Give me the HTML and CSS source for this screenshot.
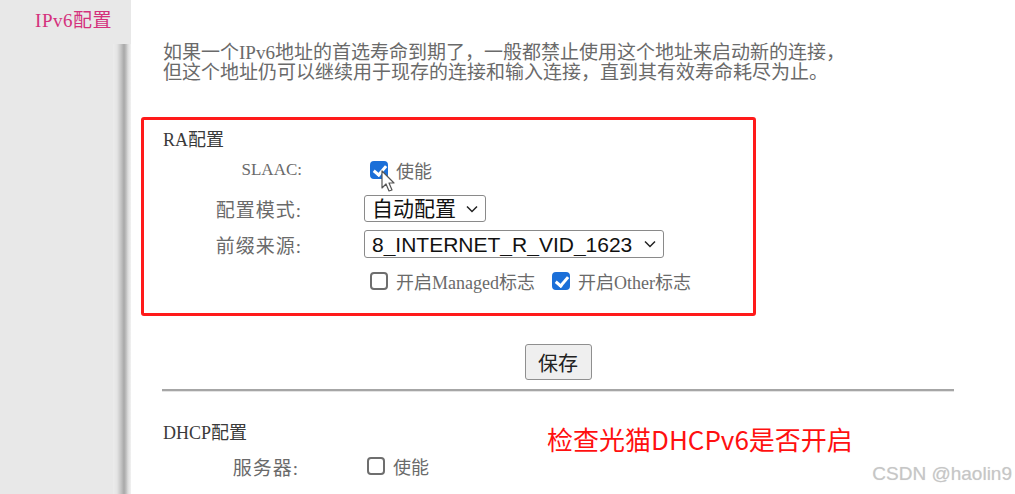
FILE: index.html
```html
<html lang="zh-CN">
<head>
    <meta charset="UTF-8">
    <meta name="viewport" content="width=device-width, initial-scale=1.0">
    <title>IPv6配置</title>
    <link rel="stylesheet" href="styles.css">
</head>
<body>

    <!-- left menu -->
    <div class="sidebar">
        <div class="menu-title">IPv6配置</div>
        <div class="menu-track">
            <div class="menu-bar"></div>
        </div>
    </div>

    <!-- main settings -->
    <div class="main">
        <p class="intro">如果一个IPv6地址的首选寿命到期了，一般都禁止使用这个地址来启动新的连接，<br>但这个地址仍可以继续用于现存的连接和输入连接，直到其有效寿命耗尽为止。</p>

        <div class="ra-box">
            <div class="group-title">RA配置</div>

            <div class="row row-slaac">
                <label class="label label-latin" for="slaac">SLAAC:</label>
                <div class="control">
                    <input type="checkbox" class="check" id="slaac" checked>
                    <span class="check-text">使能</span>
                    <svg class="cursor" width="16" height="24" viewBox="0 0 16 24">
                        <path d="M1 1 L1 18 L5 14 L8 21 L11 20 L8 13 L13 13 Z" fill="#fff" stroke="#555" stroke-width="1.2" stroke-linejoin="round"/>
                    </svg>
                </div>
            </div>

            <div class="row row-mode">
                <label class="label" for="mode">配置模式:</label>
                <div class="control">
                    <div class="select-wrap">
                        <select id="mode" class="select">
                            <option>自动配置</option>
                        </select>
                        <svg class="chevron" width="12" height="8" viewBox="0 0 12 8"><path d="M1 1.5 L6 6.5 L11 1.5" fill="none" stroke="#222" stroke-width="1.5"/></svg>
                    </div>
                </div>
            </div>

            <div class="row row-prefix">
                <label class="label" for="prefix">前缀来源:</label>
                <div class="control">
                    <div class="select-wrap">
                        <select id="prefix" class="select select-wide">
                            <option>8_INTERNET_R_VID_1623</option>
                        </select>
                        <svg class="chevron" width="12" height="8" viewBox="0 0 12 8"><path d="M1 1.5 L6 6.5 L11 1.5" fill="none" stroke="#222" stroke-width="1.5"/></svg>
                    </div>
                </div>
            </div>

            <div class="row row-flags">
                <span class="label"></span>
                <div class="control">
                    <input type="checkbox" class="check" id="managed">
                    <span class="check-text">开启Managed标志</span>
                    <input type="checkbox" class="check check-gap" id="other" checked>
                    <span class="check-text">开启Other标志</span>
                </div>
            </div>
        </div>

        <div class="actions">
            <button class="save-btn">保存</button>
            <div class="divider"></div>
        </div>

        <div class="dhcp">
            <div class="group-title">DHCP配置</div>
            <div class="row row-server">
                <label class="label" for="server">服务器:</label>
                <div class="control">
                    <input type="checkbox" class="check" id="server">
                    <span class="check-text">使能</span>
                </div>
            </div>
        </div>
    </div>

    <!-- annotation + watermark -->
    <div class="note">检查光猫DHCPv6是否开启</div>
    <div class="watermark">CSDN @haolin9</div>

</body>
</html>
```

FILE: styles.css
```css
body {
    margin: 0;
    height: 494px;
    overflow: hidden;
    display: flex;
    background: #fff;
    font-family: "Liberation Serif", "Noto Sans CJK SC", serif;
    position: relative;
}

.sidebar {
    width: 131px;
    flex-shrink: 0;
    display: flex;
    flex-direction: column;
    background: #e8e8e8;
}

.menu-title {
    height: 44px;
    line-height: 42px;
    text-align: right;
    padding-right: 19px;
    font-size: 19px;
    letter-spacing: 0.5px;
    color: #d4317c;
}

.menu-track {
    flex: 1;
    padding-left: 113px;
}

.menu-bar {
    width: 18px;
    height: 100%;
    background: linear-gradient(to right, #ececec 0px, #e4e4e4 4px, #c4c4c4 8px, #a8a8a8 11px, #bdbdbd 13px, #dcdcdc 15px, #f2f2f2 18px);
}

.main {
    flex: 1;
    padding-left: 10px;
}

.intro {
    margin: 43px 0 0 22px;
    font-size: 19px;
    line-height: 20px;
    color: #6a6a6a;
}

.ra-box {
    width: 590px;
    margin-top: 34px;
    padding: 10px 0 19px 19px;
    border: 3px solid #ff1a1a;
    border-radius: 3px;
}

.group-title {
    font-size: 18px;
    line-height: 20px;
    color: #3a3a3a;
}

.row {
    display: flex;
    align-items: center;
}

.label {
    width: 139px;
    margin-right: 62px;
    text-align: right;
    font-size: 19px;
    letter-spacing: 1px;
    color: #6a6a6a;
}

.label-latin {
    font-size: 17px;
    letter-spacing: 0;
}

.control {
    display: flex;
    align-items: center;
    position: relative;
}

.row-slaac { height: 26px; margin-top: 7px; }
.row-mode { height: 27px; margin-top: 12px; }
.row-prefix { height: 28px; margin-top: 8px; }
.row-flags { height: 26px; margin-top: 10px; }

.check {
    appearance: none;
    width: 18px;
    height: 18px;
    margin: 0 8px 0 6px;
    border: 2px solid #6e6e6e;
    border-radius: 4px;
    background: #fff;
    box-sizing: border-box;
    position: relative;
}

.check:checked {
    background: #1b6fd8;
    border-color: #1b6fd8;
}

.check:checked::after {
    content: "";
    position: absolute;
    left: 4px;
    top: 0px;
    width: 5px;
    height: 10px;
    border: solid #fff;
    border-width: 0 3px 3px 0;
    transform: rotate(40deg);
}

.check-gap {
    margin-left: 17px;
}

.check-text {
    font-size: 18px;
    color: #6a6a6a;
}

.cursor {
    position: absolute;
    left: 17px;
    top: 13px;
}

.select-wrap {
    position: relative;
}

.select {
    appearance: none;
    width: 122px;
    height: 27px;
    padding: 0 0 0 7px;
    border: 1px solid #8a8a8a;
    border-radius: 3px;
    background: #fff;
    font-family: "Liberation Sans", "Noto Sans CJK SC", sans-serif;
    font-size: 21px;
    color: #111;
}

.select-wide {
    width: 300px;
    height: 28px;
}

.chevron {
    position: absolute;
    right: 8px;
    top: 10px;
    pointer-events: none;
}

.actions {
    width: 792px;
    margin-left: 21px;
    display: flex;
    flex-direction: column;
    align-items: center;
}

.save-btn {
    margin-top: 28px;
    width: 67px;
    height: 36px;
    border: 1px solid #8f8f8f;
    border-radius: 3px;
    background: #efefef;
    font-family: "Noto Sans CJK SC", sans-serif;
    font-size: 20px;
    color: #222;
    padding: 0;
}

.divider {
    width: 100%;
    height: 2px;
    margin-top: 9px;
    background: #a6a6a6;
    box-shadow: 0 1px 0 #e4e4e4;
}

.dhcp {
    margin-left: 22px;
    margin-top: 32px;
}

.row-server {
    height: 26px;
    margin-top: 10px;
    margin-left: -3px;
}

.note {
    position: absolute;
    left: 547px;
    top: 423px;
    font-family: "Noto Sans CJK SC", sans-serif;
    font-size: 26px;
    line-height: 32px;
    color: #ff1010;
}

.watermark {
    position: absolute;
    right: 3px;
    top: 463px;
    font-family: "Liberation Sans", sans-serif;
    font-size: 19px;
    color: #c6c6c6;
    text-shadow: 0 0 1px #e0e0e0;
}
```
